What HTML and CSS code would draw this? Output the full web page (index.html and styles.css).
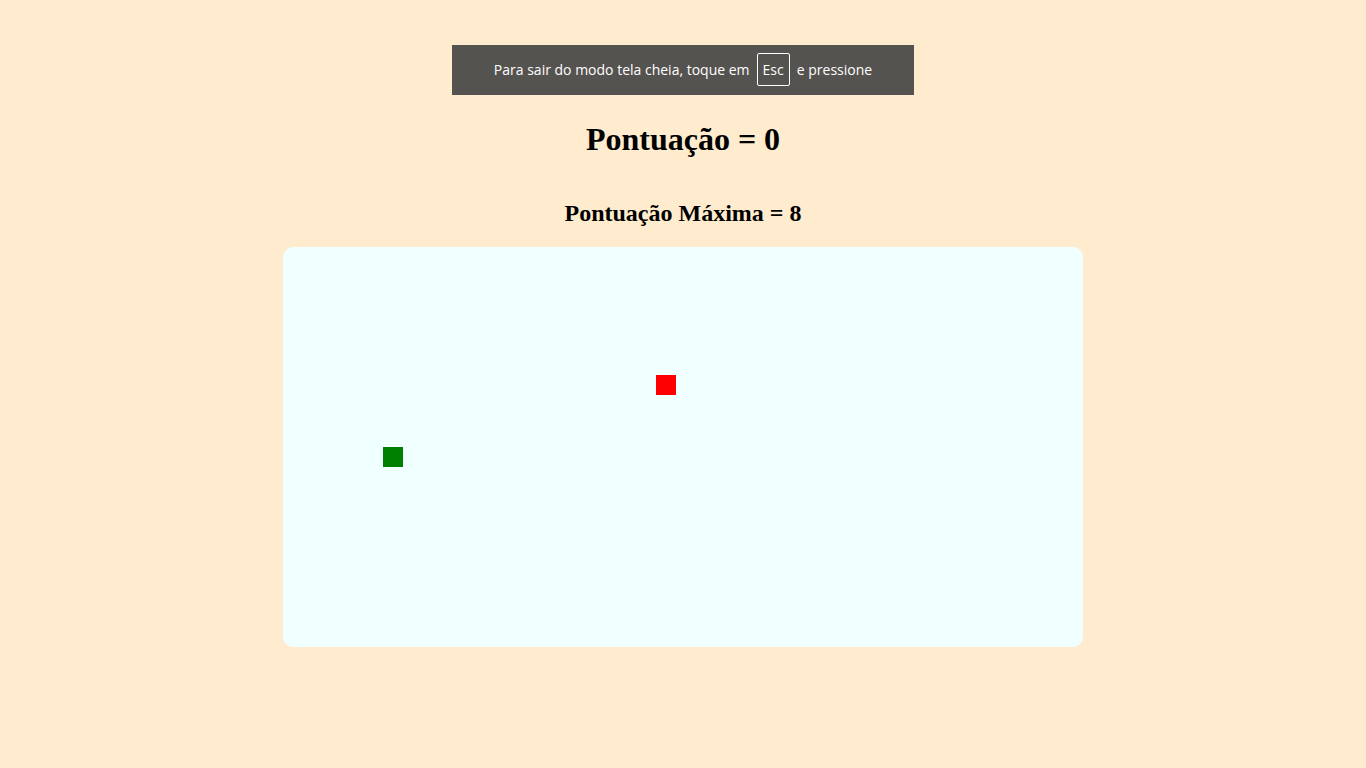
FILE: index.html
```html
<!DOCTYPE html>
<html lang="pt">
<head>
<meta charset="utf-8">
<title>Snake</title>
<link rel="stylesheet" href="styles.css">
</head>
<body>
<div class="fs-banner">
  <span>Para sair do modo tela cheia, toque em</span>
  <span class="key">Esc</span>
  <span>e pressione</span>
</div>
<main class="page">
  <h1 class="score">Pontuação = 0</h1>
  <h2 class="best">Pontuação Máxima = 8</h2>
  <div class="board">
    <div class="cell food" style="left:373px; top:128px"></div>
    <div class="cell snake" style="left:100px; top:200px"></div>
  </div>
</main>
</body>
</html>
```

FILE: styles.css
```css
html, body {
  margin: 0;
  padding: 0;
}
body {
  background: #ffebcd;
  font-family: "Liberation Serif", "Times New Roman", serif;
  color: #000;
  min-height: 768px;
}
.page {
  display: flex;
  flex-direction: column;
  align-items: center;
  padding-top: 121px;
}
.score {
  margin: 0;
  font-size: 32px;
  line-height: 36px;
  font-weight: bold;
}
.best {
  margin: 43px 0 20px;
  font-size: 24px;
  line-height: 27px;
  font-weight: bold;
}
.board {
  position: relative;
  width: 800px;
  height: 400px;
  background: #f0ffff;
  border-radius: 10px;
}
.cell {
  position: absolute;
  width: 20px;
  height: 20px;
}
.food { background: #ff0000; }
.snake { background: #008000; }
.fs-banner {
  position: absolute;
  left: 452px;
  top: 45px;
  width: 462px;
  height: 50px;
  box-sizing: border-box;
  padding-bottom: 2px;
  background: #555350;
  color: #fff;
  font-family: "Open Sans", "Noto Sans", sans-serif;
  font-size: 14px;
  display: flex;
  align-items: center;
  justify-content: center;
  gap: 7px;
}
.fs-banner .key {
  border: 1px solid #fff;
  border-radius: 2px;
  height: 33px;
  box-sizing: border-box;
  padding: 0 5px;
  display: flex;
  align-items: center;
}
```
